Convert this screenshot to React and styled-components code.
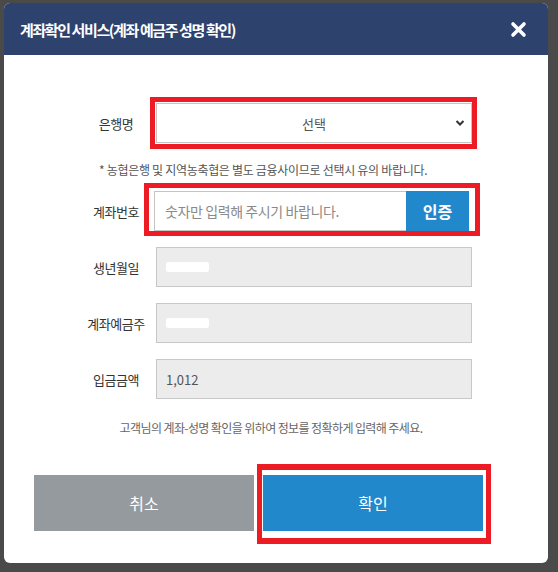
import React from 'react'
import styled, { createGlobalStyle } from 'styled-components'

const GlobalStyle = createGlobalStyle`
  html, body {
    margin: 0;
    padding: 0;
    background: #4a4a4a;
    font-family: "Noto Sans CJK KR", "Noto Sans", sans-serif;
  }
  * { box-sizing: border-box; }
`

const Page = styled.div`
  width: 558px;
  height: 572px;
  padding: 3px 0 0 4px;
`

const Modal = styled.div`
  width: 544px;
  height: 560px;
  background: #fff;
  border-radius: 6px;
  overflow: hidden;
`

const Header = styled.div`
  height: 52px;
  background: #2e426e;
  display: flex;
  align-items: center;
  justify-content: space-between;
  padding: 0 21px 0 16px;

  h2 {
    margin: 0;
    color: #fff;
    font-size: 15px;
    font-weight: 700;
    letter-spacing: -1.4px;
  }
`

const Close = styled.button`
  border: 0;
  background: none;
  padding: 0;
  width: 17px;
  height: 17px;
  cursor: pointer;
  display: flex;
`

const Body = styled.div`
  padding: 48px 0 0 72px;
`

const Row = styled.div`
  display: grid;
  grid-template-columns: 80px 316px;
  align-items: center;
  margin-top: ${p => p.$gap || 0}px;
`

const Label = styled.label`
  text-align: center;
  font-size: 13px;
  color: #333;
  letter-spacing: -0.5px;
`

const Marked = styled.div`
  position: relative;

  &::after {
    content: '';
    position: absolute;
    top: ${p => p.$t}px;
    right: ${p => p.$r}px;
    bottom: ${p => p.$b}px;
    left: ${p => p.$l}px;
    border: 5px solid #ed1c24;
    border-width: ${p => p.$w || '5px'};
    pointer-events: none;
  }
`

const Select = styled.select`
  width: 316px;
  height: 40px;
  border: 1px solid #c4c4c4;
  background: #fff;
  appearance: none;
  text-align: center;
  text-align-last: center;
  font-family: inherit;
  font-size: 13px;
  color: #555;
  outline: none;
`

const Chevron = styled.svg`
  position: absolute;
  right: 7px;
  top: 16px;
  pointer-events: none;
`

const Note = styled.p`
  margin: 17px 0 0 23px;
  font-size: 12px;
  line-height: 20px;
  color: #555;
  letter-spacing: -0.3px;
`

const Group = styled.div`
  display: flex;
  width: 315px;
  height: 40px;
  margin-left: -2px;
`

const Input = styled.input`
  flex: 1;
  min-width: 0;
  border: 1px solid #c4c4c4;
  border-right: 0;
  padding: 0 10px;
  font-family: inherit;
  font-size: 14px;
  color: #333;
  outline: none;

  &::placeholder {
    color: #8a8a8a;
    letter-spacing: -0.4px;
  }
`

const AuthButton = styled.button`
  width: 63px;
  border: 0;
  background: #2288cc;
  color: #fff;
  font-family: inherit;
  font-size: 16px;
  font-weight: 700;
  cursor: pointer;
`

const Field = styled.div`
  height: 40px;
  background: #ececec;
  border: 1px solid #c8c8c8;
  display: flex;
  align-items: center;
  padding: 0 9px;
  font-size: 13px;
  color: #555;
`

const Redacted = styled.span`
  display: block;
  width: 43px;
  height: 10px;
  background: #fff;
  border-radius: 2px;
`

const Notice = styled.p`
  margin: 19px 0 0;
  padding-right: 10px;
  text-align: center;
  font-size: 12px;
  line-height: 20px;
  color: #666;
  letter-spacing: -0.6px;
`

const Actions = styled.div`
  display: flex;
  gap: 9px;
  padding-left: 30px;
  margin-top: 37px;
`

const ActionButton = styled.button`
  width: 220px;
  height: 56px;
  border: 0;
  background: ${p => (p.$primary ? '#2288cc' : '#959a9e')};
  color: #fff;
  font-family: inherit;
  font-size: 16px;
  font-weight: 400;
  cursor: pointer;
`

const App = () => {
  return (
    <Page>
      <GlobalStyle />
      <Modal>
        <Header>
          <h2>계좌확인 서비스(계좌 예금주 성명 확인)</h2>
          <Close aria-label="닫기">
            <svg width="17" height="17" viewBox="0 0 17 17">
              <path d="M3 3L14 14M14 3L3 14" stroke="#fff" strokeWidth="3.6" strokeLinecap="round" />
            </svg>
          </Close>
        </Header>

        <Body>
          <Row>
            <Label>은행명</Label>
            <Marked $t={-6} $r={-5} $b={-6} $l={-6}>
              <Select defaultValue="">
                <option value="">선택</option>
              </Select>
              <Chevron width="10" height="8" viewBox="0 0 10 8">
                <path d="M1.5 2L5 5.5L8.5 2" fill="none" stroke="#333" strokeWidth="2" />
              </Chevron>
            </Marked>
          </Row>

          <Note>* 농협은행 및 지역농축협은 별도 금융사이므로 선택시 유의 바랍니다.</Note>

          <Row $gap={11}>
            <Label>계좌번호</Label>
            <Marked $t={-8} $r={-8} $b={-5} $l={-12}>
              <Group>
                <Input placeholder="숫자만 입력해 주시기 바랍니다." />
                <AuthButton>인증</AuthButton>
              </Group>
            </Marked>
          </Row>

          <Row $gap={16}>
            <Label>생년월일</Label>
            <Field><Redacted /></Field>
          </Row>

          <Row $gap={16}>
            <Label>계좌예금주</Label>
            <Field><Redacted /></Field>
          </Row>

          <Row $gap={16}>
            <Label>입금금액</Label>
            <Field>1,012</Field>
          </Row>
        </Body>

        <Notice>고객님의 계좌-성명 확인을 위하여 정보를 정확하게 입력해 주세요.</Notice>

        <Actions>
          <ActionButton>취소</ActionButton>
          <Marked $t={-11} $r={-8} $b={-13} $l={-6} $w="6px 5px">
            <ActionButton $primary>확인</ActionButton>
          </Marked>
        </Actions>
      </Modal>
    </Page>
  )
}

export default App
